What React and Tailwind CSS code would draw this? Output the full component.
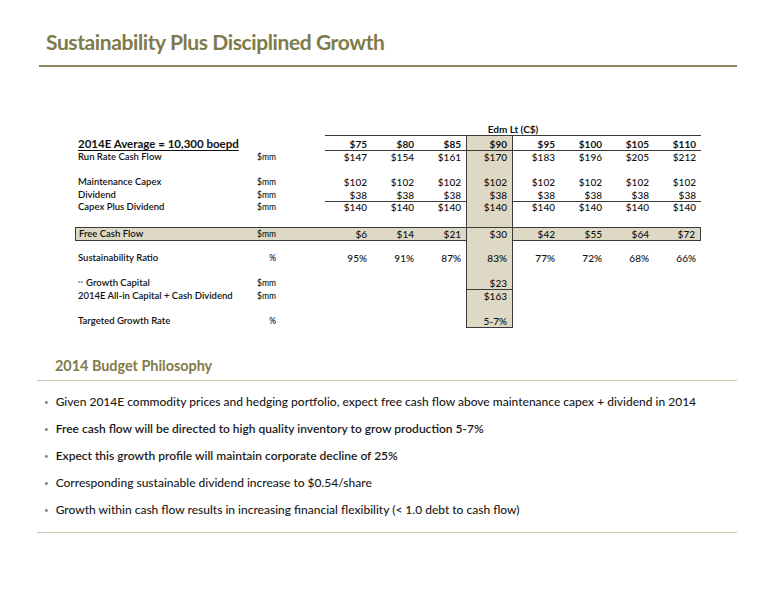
import clsx from 'clsx'

const prices = ['$75', '$80', '$85', '$90', '$95', '$100', '$105', '$110']

const rows = [
  { label: 'Run Rate Cash Flow', unit: '$mm', vals: ['$147', '$154', '$161', '$170', '$183', '$196', '$205', '$212'] },
  {},
  { label: 'Maintenance Capex', unit: '$mm', vals: ['$102', '$102', '$102', '$102', '$102', '$102', '$102', '$102'] },
  { label: 'Dividend', unit: '$mm', vals: ['$38', '$38', '$38', '$38', '$38', '$38', '$38', '$38'], rule: true },
  { label: 'Capex Plus Dividend', unit: '$mm', vals: ['$140', '$140', '$140', '$140', '$140', '$140', '$140', '$140'] },
  {},
  { label: 'Free Cash Flow', unit: '$mm', vals: ['$6', '$14', '$21', '$30', '$42', '$55', '$64', '$72'], band: true },
  {},
  { label: 'Sustainability Ratio', unit: '%', vals: ['95%', '91%', '87%', '83%', '77%', '72%', '68%', '66%'] },
  {},
  { label: 'Growth Capital', stars: true, unit: '$mm', vals: ['', '', '', '$23', '', '', '', ''], hlRule: true },
  { label: '2014E All-in Capital + Cash Dividend', unit: '$mm', vals: ['', '', '', '$163', '', '', '', ''] },
  {},
  { label: 'Targeted Growth Rate', unit: '%', vals: ['', '', '', '5-7%', '', '', '', ''], hlRule: true },
]

const bullets = [
  { text: 'Given 2014E commodity prices and hedging portfolio, expect free cash flow above maintenance capex + dividend in 2014' },
  { text: 'Free cash flow will be directed to high quality inventory to grow production 5-7%', strong: true },
  { text: 'Expect this growth profile will maintain corporate decline of 25%', strong: true },
  { text: 'Corresponding sustainable dividend increase to $0.54/share' },
  { text: 'Growth within cash flow results in increasing financial flexibility (< 1.0 debt to cash flow)' },
]

const grid = 'grid grid-cols-[177px_24px_49px_repeat(8,47px)]'
const tan = 'bg-[#ddd9c4]'

function TableRow({ row }) {
  const vals = row.vals || ['', '', '', '', '', '', '', '']
  return (
    <div className={clsx(grid, 'h-[12.6px] text-[#111]')}>
      <div
        className={clsx(
          'pl-[3px] text-[9.5px] font-semibold leading-[12px] whitespace-nowrap',
          row.band && clsx(tan, 'border-y border-l border-[#3a3a3a] leading-[10px]')
        )}
      >
        {row.stars && <span className="text-[6px] align-top mr-[3px]">**</span>}
        {row.label}
      </div>
      <div
        className={clsx(
          'text-right text-[8.5px] font-medium leading-[12px]',
          row.band && clsx(tan, 'border-y border-[#3a3a3a] leading-[10px]')
        )}
      >
        {row.unit}
      </div>
      <div className={clsx(row.band && clsx(tan, 'border-y border-[#3a3a3a]'))} />
      {vals.map((v, i) => (
        <div
          key={i}
          className={clsx(
            'text-right pr-[5px] text-[10px] font-medium leading-[12px]',
            row.rule && 'border-b border-[#3a3a3a] leading-[11px]',
            i === 3 && clsx(tan, 'border-x border-[#3a3a3a]'),
            i === 3 && row.hlRule && 'border-b',
            row.band && clsx(tan, 'border-y border-[#3a3a3a] leading-[10px]'),
            row.band && i === 7 && 'border-r'
          )}
        >
          {v}
        </div>
      ))}
    </div>
  )
}

export default function App() {
  return (
    <div className="w-[776px] h-[600px] bg-white overflow-hidden font-['Lato','Open_Sans',sans-serif]">
      <div className="pl-[46px] pt-[29px] text-[21px] leading-[26px] font-bold tracking-[-0.4px] text-[#7f7a4a]">
        Sustainability Plus Disciplined Growth
      </div>
      <div className="mt-[10px] ml-[39px] w-[698px] h-[2px] bg-[#8c8659]" />

      <div className="mt-[56px] ml-[75px]">
        <div className={clsx(grid, 'h-[12px]')}>
          <div className="col-start-4 col-span-8 text-center text-[10px] font-bold leading-[12px] text-[#111]">
            Edm Lt (C$)
          </div>
        </div>
        <div className={clsx(grid, 'h-[16px] text-[#111]')}>
          <div className="col-span-3 pl-[3px] pt-[2px] text-[11.5px] font-bold leading-[13px] underline underline-offset-[2px] whitespace-nowrap">
            2014E Average = 10,300 boepd
          </div>
          {prices.map((p, i) => (
            <div
              key={p}
              className={clsx(
                'text-right pr-[5px] pt-[3px] text-[10px] font-bold leading-[11px] border-y border-[#3a3a3a]',
                i === 3 && clsx(tan, 'border-x')
              )}
            >
              {p}
            </div>
          ))}
        </div>
        {rows.map((row, i) => (
          <TableRow key={i} row={row} />
        ))}
      </div>

      <div className="mt-[29px] pl-[55px] text-[14.4px] leading-[20px] font-bold text-[#7f7a4a]">
        2014 Budget Philosophy
      </div>
      <div className="mt-[4px] ml-[37px] w-[700px] h-px bg-[#cdc9ad]" />
      <ul className="mt-[7px] ml-[44px]">
        {bullets.map((b) => (
          <li key={b.text} className="h-[27px] flex items-center gap-[7px] text-[12px] text-[#1a1a1a]">
            <span className="text-[8px] text-[#888]">•</span>
            <span className={clsx(b.strong ? 'font-semibold' : 'font-medium')}>{b.text}</span>
          </li>
        ))}
      </ul>
      <div className="mt-[9px] ml-[37px] w-[700px] h-px bg-[#cdc9ad]" />
    </div>
  )
}
